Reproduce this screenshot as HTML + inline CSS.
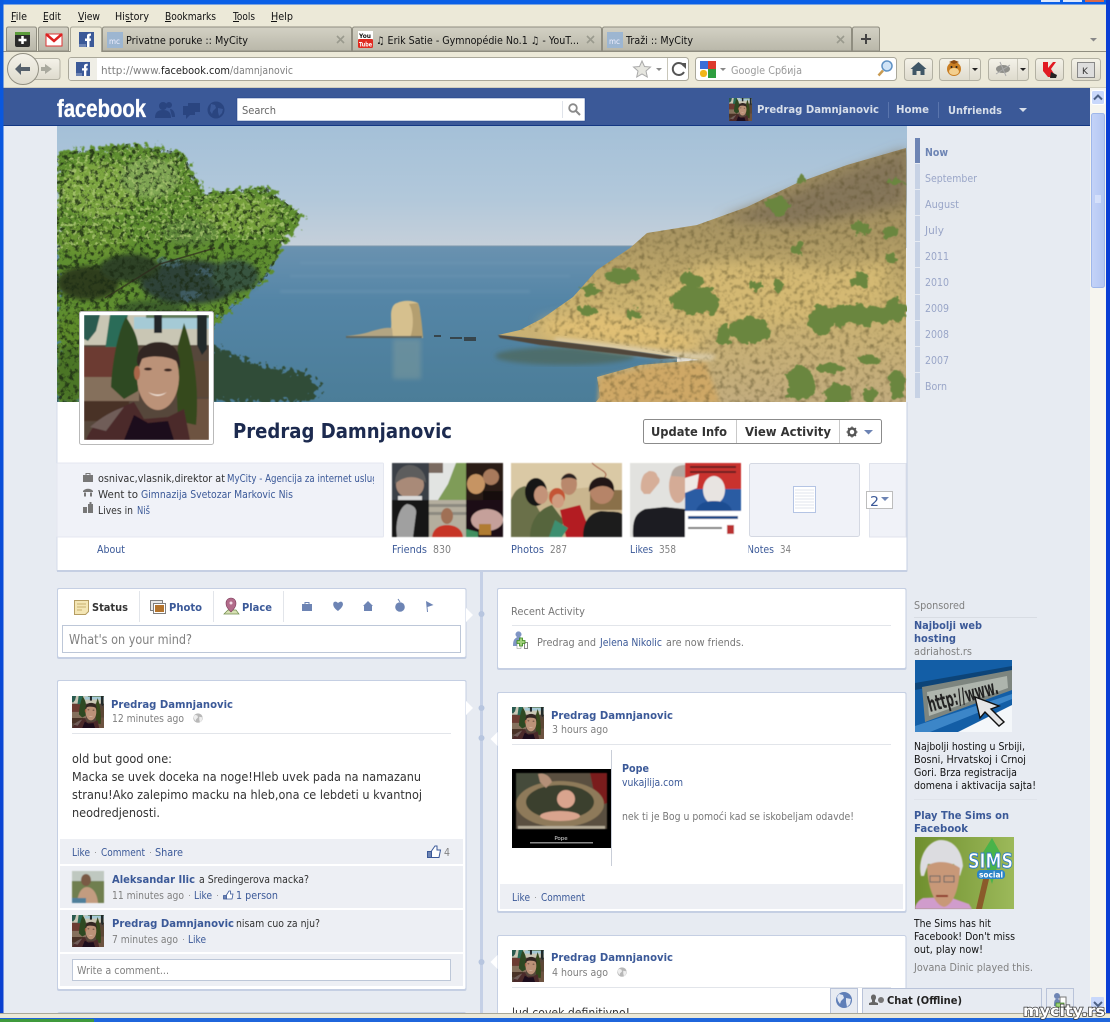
<!DOCTYPE html>
<html><head><meta charset="utf-8"><title>Predrag Damnjanovic</title>
<style>
html,body{margin:0;padding:0;width:1110px;height:1022px;overflow:hidden;background:#e7ebf2}
svg{display:block}
text{font-family:"DejaVu Sans","Liberation Sans",sans-serif;font-size:10.5px;fill:#333;white-space:pre}
.b{font-weight:bold}
.l{fill:#3b5998}
.g{fill:#808080}
.m{fill:#111;font-size:10.5px}
.n{fill:#9aa6c8}
.card{fill:#fff;stroke:#c5cfe3;stroke-width:1}
.bar{fill:#edeff4}
.hr{stroke:#e2e5ea;stroke-width:1}
</style></head><body>
<svg xmlns="http://www.w3.org/2000/svg" width="1110" height="1022" viewBox="0 0 1110 1022">
<defs>
<linearGradient id="sky" x1="0" y1="0" x2="0" y2="1"><stop offset="0" stop-color="#a4c0d8"/><stop offset=".6" stop-color="#b2c8da"/><stop offset="1" stop-color="#c6d0da"/></linearGradient>
<linearGradient id="sea" x1="0" y1="0" x2="0" y2="1"><stop offset="0" stop-color="#6a92b0"/><stop offset=".35" stop-color="#5485a6"/><stop offset="1" stop-color="#4b7d98"/></linearGradient>
<linearGradient id="hillg" x1="0" y1="0" x2="0" y2="1"><stop offset="0" stop-color="#96865f"/><stop offset=".35" stop-color="#ab9763"/><stop offset=".6" stop-color="#ccb370"/><stop offset="1" stop-color="#c2ac7e"/></linearGradient>
<linearGradient id="tab" x1="0" y1="0" x2="0" y2="1"><stop offset="0" stop-color="#d3d1c4"/><stop offset="1" stop-color="#b9b7a9"/></linearGradient>
<linearGradient id="btn" x1="0" y1="0" x2="0" y2="1"><stop offset="0" stop-color="#f4f2e9"/><stop offset="1" stop-color="#dedbcd"/></linearGradient>
<linearGradient id="thumb" x1="0" y1="0" x2="1" y2="0"><stop offset="0" stop-color="#c4d3f8"/><stop offset="1" stop-color="#b3c6f2"/></linearGradient>
<linearGradient id="win" x1="0" y1="0" x2="0" y2="1"><stop offset="0" stop-color="#0a5be0"/><stop offset="1" stop-color="#0b3fd0"/></linearGradient>
<linearGradient id="sims" x1="0" y1="0" x2="1" y2="0"><stop offset="0" stop-color="#6f8f2e"/><stop offset="1" stop-color="#9cb95a"/></linearGradient>
<filter id="b0" x="-5%" y="-5%" width="110%" height="110%"><feGaussianBlur stdDeviation=".6"/></filter>
<filter id="b1" x="-10%" y="-10%" width="120%" height="120%"><feGaussianBlur stdDeviation="1.2"/></filter>
<filter id="b2" x="-10%" y="-10%" width="120%" height="120%"><feGaussianBlur stdDeviation="2.5"/></filter>
<filter id="b5" x="-20%" y="-20%" width="140%" height="140%"><feGaussianBlur stdDeviation="6"/></filter>
<filter id="rough" x="-8%" y="-8%" width="116%" height="116%" color-interpolation-filters="sRGB"><feTurbulence type="fractalNoise" baseFrequency=".11" numOctaves="3" seed="3" result="n"/><feDisplacementMap in="SourceGraphic" in2="n" scale="13" xChannelSelector="R" yChannelSelector="G"/><feGaussianBlur stdDeviation=".5"/></filter>
<filter id="needle" x="-8%" y="-8%" width="116%" height="116%" color-interpolation-filters="sRGB"><feTurbulence type="fractalNoise" baseFrequency=".2" numOctaves="3" seed="11" result="n"/><feDisplacementMap in="SourceGraphic" in2="n" scale="20" xChannelSelector="R" yChannelSelector="G"/><feGaussianBlur stdDeviation=".5"/></filter>
<filter id="tex" x="0" y="0" width="100%" height="100%" color-interpolation-filters="sRGB"><feTurbulence type="fractalNoise" baseFrequency=".2" numOctaves="3" seed="4"/><feColorMatrix values="0 0 0 0 .33  0 0 0 0 .29  0 0 0 0 .15  3 0 0 0 -1.45"/><feGaussianBlur stdDeviation=".6"/><feComposite in2="SourceAlpha" operator="in"/></filter>
<filter id="texd" x="0" y="0" width="100%" height="100%" color-interpolation-filters="sRGB"><feTurbulence type="fractalNoise" baseFrequency=".2" numOctaves="3" seed="9"/><feColorMatrix values="0 0 0 0 .11  0 0 0 0 .17  0 0 0 0 .08  4 0 0 0 -1.9"/><feComposite in2="SourceAlpha" operator="in"/></filter>
<filter id="texl" x="0" y="0" width="100%" height="100%" color-interpolation-filters="sRGB"><feTurbulence type="fractalNoise" baseFrequency=".26" numOctaves="2" seed="21"/><feColorMatrix values="0 0 0 0 .66  0 0 0 0 .77  0 0 0 0 .44  0 4.5 0 0 -2.3"/><feComposite in2="SourceAlpha" operator="in"/></filter>
<clipPath id="cov"><rect x="57" y="126" width="850" height="276"/></clipPath>
<clipPath id="c1"><rect x="0" y="0" width="125" height="125"/></clipPath>
<clipPath id="infoclip"><rect x="57" y="463" width="317" height="74"/></clipPath>
<clipPath id="notesclip"><rect x="748.500" y="540" width="60" height="20"/></clipPath>
<symbol id="me" viewBox="0 0 125 125">
<g clip-path="url(#c1)"><g filter="url(#b0)">
<rect width="125" height="125" fill="#57463a"/>
<rect width="125" height="30" fill="#c9c6b4"/>
<rect x="50" y="2" width="75" height="12" fill="#a5cad6"/>
<rect x="62" y="0" width="63" height="3" fill="#5f7a58"/>
<path d="M0 0H16L12 16 4 26 0 24Z" fill="#2a5a50"/>
<path d="M26 0H44L40 16 30 40 20 42Z" fill="#2b6c58"/>
<rect x="0" y="32" width="36" height="30" fill="#6c3a30"/>
<rect x="0" y="62" width="55" height="24" fill="#85705c"/>
<rect x="0" y="86" width="45" height="20" fill="#4a3328"/>
<rect x="90" y="46" width="35" height="36" fill="#5b4636"/>
<rect x="100" y="84" width="25" height="41" fill="#6d5240"/>
<path d="M27 72C28 48 34 16 42 2 50 14 56 26 54 40L54 76 40 84Z" fill="#2f4a22"/>
<path d="M100 8C108 30 116 70 112 110L94 106 92 60 94 30Z" fill="#34491f"/>
<path d="M113 0h10v34l-5 6-5-10Z" fill="#222b2c"/>
<rect x="70" y="0" width="8" height="18" fill="#20282b"/>
<ellipse cx="74" cy="62" rx="21" ry="33" fill="#bb9278"/>
<ellipse cx="53" cy="58" rx="3" ry="7" fill="#a9664a"/>
<path d="M53 48C52 33 63 27 75 27 88 27 97 34 96 54L92 46C84 41 66 40 58 44L55 52Z" fill="#332722"/>
<ellipse cx="64" cy="54" rx="4" ry="1.500" fill="#3a2720"/><ellipse cx="84" cy="55" rx="4" ry="1.500" fill="#3a2720"/>
<path d="M64 77q10 5 19 0q-9 8-19 0Z" fill="#efe0d4"/>
<path d="M2 125C10 104 30 95 50 87L60 104 84 102 100 94 106 125Z" fill="#4c2a2c"/>
<path d="M40 125 L50 100 64 108 84 106 90 125Z" fill="#1c0e1a"/>
<path d="M6 112q16-14 34-20l-18 24Z" fill="#6f5d58"/>
</g></g>
</symbol>
<symbol id="globe" viewBox="0 0 16 16"><circle cx="8" cy="8" r="8" fill="#5f7fb8"/><path d="M3 2l4 1 1 3-3 3-1 3-2-3-1-4ZM10 6l5 1-1 5-3 3-1-5Z" fill="#dfe6f3"/></symbol>
<symbol id="ggl" viewBox="0 0 16 16"><circle cx="8" cy="8" r="7.500" fill="#b8b8b8"/><path d="M3 3l4 1 1 3-3 3-1 3-2-3-1-4ZM10 6l5 1-1 5-3 3-1-5Z" fill="#eee"/></symbol>
</defs>

<!-- page -->
<rect width="1110" height="1022" fill="#e7ebf2"/>

<!-- fb bar -->
<rect x="3" y="88" width="1087" height="37" fill="#3b5998"/>
<rect x="3" y="125" width="1087" height="1" fill="#133783"/>
<text x="57" y="117" textLength="89" lengthAdjust="spacingAndGlyphs" style="font:bold 25px 'Liberation Sans',sans-serif;fill:#fff;stroke:#fff;stroke-width:.35">facebook</text>
<g fill="#2a4580">
<circle cx="163" cy="106" r="4"/><path d="M155 118c0-6 3-8 8-8s8 2 8 8Z"/><circle cx="169" cy="105" r="3"/><path d="M170 109c3 0 5 3 5 8h-3Z"/>
<rect x="183" y="106" width="12" height="9"/><path d="M186 115v4l4-4Z"/><rect x="188" y="103" width="12" height="9"/>
<circle cx="216" cy="110" r="8.500"/></g>
<path d="M211 104l4 1 1 3-3 3-1 3-2-3ZM218 108l5 1-1 4-3 3-1-4Z" fill="#3b5998"/>
<rect x="237" y="98" width="348" height="23" fill="#fff" stroke="#1d4088" stroke-width=".5"/>
<text x="242" y="114" textLength="34" lengthAdjust="spacingAndGlyphs" class="g" style="fill:#666">Search</text>
<line x1="562.500" y1="101" x2="562.500" y2="118" stroke="#dfe3ea"/>
<circle cx="573" cy="108" r="3.800" fill="none" stroke="#8a8a8a" stroke-width="1.800"/><line x1="576" y1="111" x2="580" y2="115" stroke="#8a8a8a" stroke-width="2"/>
<svg x="729" y="98" width="23" height="23" viewBox="0 0 125 125"><use href="#me" width="125" height="125"/></svg>
<text x="757" y="113" class="b" textLength="122" lengthAdjust="spacingAndGlyphs" style="fill:#d8dfea">Predrag Damnjanovic</text>
<rect x="888" y="102" width="1" height="16" fill="#5a75ad"/>
<text x="896" y="113" class="b" textLength="33" lengthAdjust="spacingAndGlyphs" style="fill:#d8dfea">Home</text>
<rect x="938" y="102" width="1" height="16" fill="#5a75ad"/>
<text x="948" y="114" class="b" textLength="54" lengthAdjust="spacingAndGlyphs" style="fill:#d8dfea">Unfriends</text>
<path d="M1019 108h8l-4 4Z" fill="#d8dfea"/>

<!-- cover -->
<g clip-path="url(#cov)">
<rect x="57" y="126" width="850" height="122" fill="url(#sky)"/>
<rect x="57" y="246" width="620" height="157" fill="url(#sea)"/>
<g fill="#85a8c0" opacity=".22" filter="url(#b1)"><rect x="300" y="262" width="320" height="2"/><rect x="290" y="275" width="280" height="2"/><rect x="280" y="290" width="250" height="3"/></g>
<rect x="57" y="245.500" width="600" height="1" fill="#7e98ac"/>
<ellipse cx="565" cy="356" rx="70" ry="9" fill="#4d6d6c" filter="url(#b2)"/>
<!-- rock -->
<g filter="url(#b0)">
<path d="M390 333c2-6 1-12 1-18 0-6 2-11 6-12 6-3 15-3 21 0 3 7 2 13 2 19l3 16-33-1Z" fill="#d6c08e"/>
<path d="M409 304c5 8 5 24 1 34l13-1c-1-12-2-24-5-34Z" fill="#b49f6f"/>
<path d="M346 336c10-1 18-2 26-5 8-2 14-4 20-3l1 10-46-.5Z" fill="#b3a583"/>
<rect x="346" y="336" width="76" height="2" fill="#5f6660"/>
</g>
<rect x="393" y="339" width="28" height="40" fill="#96a89c" opacity=".35" filter="url(#b2)"/>
<g fill="#37454c"><rect x="434" y="335" width="7" height="2"/><rect x="450" y="337" width="12" height="2"/><rect x="464" y="337" width="12" height="4"/></g>
<!-- hill -->
<path d="M906 148 847 165 797 183 747 207 697 225 647 233 630 248 597 270 573 297 543 318 520 330 498 335 547 340 613 348 672 356 700 360 640 365 597 377 600 397 595 403H906Z" fill="url(#hillg)"/>
<g filter="url(#b5)">
<path d="M650 300 700 265 760 262 830 270 890 262 880 300 800 320 700 330Z" fill="#d4b973"/>
<path d="M540 322 600 310 660 325 710 340 680 352 610 343 547 336Z" fill="#e0bf74"/>
<path d="M906 150 800 190 720 220 800 225 906 205Z" fill="#85765a"/>
</g>
<path d="M600 378 655 365 705 362 720 403H598Z" fill="#cfa866" filter="url(#b2)"/>
<path d="M556 338 610 344 672 352 716 355 712 360 670 358 610 351 554 342Z" fill="#e0d6bc" opacity=".8" filter="url(#b2)"/>
<path d="M498 335 547 340 613 348 680 358 660 359 610 353 540 345 500 338Z" fill="#51463a" filter="url(#b0)"/>
<path d="M906 148 847 165 797 183 747 207 697 225 647 233 630 248 597 270 573 297 543 318 520 330 598 340 680 356 640 365 597 377 600 403H906Z" filter="url(#tex)" opacity=".5"/>
<g fill="#6a863f" filter="url(#rough)">
<ellipse cx="623" cy="276" rx="17" ry="8"/><ellipse cx="593" cy="291" rx="9" ry="5"/><ellipse cx="588" cy="310" rx="8" ry="4"/><ellipse cx="633" cy="314" rx="8" ry="5"/>
<ellipse cx="695" cy="300" rx="24" ry="14"/><ellipse cx="692" cy="280" rx="11" ry="8"/><ellipse cx="710" cy="305" rx="8" ry="9"/>
<ellipse cx="750" cy="330" rx="20" ry="13"/><ellipse cx="724" cy="335" rx="7" ry="10"/><ellipse cx="778" cy="286" rx="5" ry="6"/><ellipse cx="757" cy="286" rx="7" ry="5"/>
<ellipse cx="855" cy="315" rx="40" ry="11"/><ellipse cx="820" cy="320" rx="12" ry="14"/><ellipse cx="895" cy="310" rx="12" ry="11"/>
<ellipse cx="860" cy="228" rx="10" ry="8"/><ellipse cx="890" cy="232" rx="7" ry="6"/><ellipse cx="778" cy="205" rx="12" ry="10"/><ellipse cx="801" cy="179" rx="5" ry="5"/>
<ellipse cx="896" cy="181" rx="6" ry="5"/><ellipse cx="799" cy="248" rx="5" ry="6"/><ellipse cx="860" cy="280" rx="8" ry="8"/><ellipse cx="890" cy="258" rx="6" ry="5"/>
<ellipse cx="800" cy="382" rx="14" ry="18"/><ellipse cx="838" cy="394" rx="14" ry="10"/><ellipse cx="870" cy="395" rx="8" ry="7"/><ellipse cx="897" cy="385" rx="7" ry="15"/><ellipse cx="870" cy="360" rx="10" ry="5"/><ellipse cx="830" cy="368" rx="14" ry="5"/>
</g>
<!-- pine -->
<path d="M213 345 263 367 305 372 320 387 310 402H190Z" fill="#304c38" filter="url(#needle)"/>
<path d="M57 153 87 150 133 143 183 153 203 193 267 187 303 217 283 247 267 277 233 307 217 322 175 402H57Z" fill="#5f8e30" filter="url(#needle)"/>
<g filter="url(#b2)">
<ellipse cx="100" cy="190" rx="40" ry="28" fill="#7ca53f"/>
<ellipse cx="150" cy="178" rx="30" ry="20" fill="#7fa552"/>
<ellipse cx="238" cy="215" rx="40" ry="19" fill="#76a03a"/>
<ellipse cx="95" cy="240" rx="36" ry="18" fill="#689330"/>
<ellipse cx="190" cy="232" rx="28" ry="14" fill="#60893a"/>
<ellipse cx="88" cy="283" rx="31" ry="17" fill="#2f3d1f"/>
<ellipse cx="190" cy="282" rx="50" ry="22" fill="#2f4338"/>
<ellipse cx="235" cy="276" rx="24" ry="16" fill="#39553f"/>
<ellipse cx="130" cy="268" rx="30" ry="14" fill="#2f4226"/>
<ellipse cx="90" cy="330" rx="34" ry="20" fill="#5d8a2c"/>
<ellipse cx="150" cy="310" rx="34" ry="10" fill="#3c5f2c"/>
<ellipse cx="70" cy="375" rx="14" ry="30" fill="#4c7428"/>
</g>
<g fill="#4d7086" filter="url(#rough)" opacity=".55"><ellipse cx="170" cy="262" rx="12" ry="5"/><ellipse cx="205" cy="272" rx="10" ry="4"/><ellipse cx="190" cy="296" rx="11" ry="5"/></g>
<path d="M57 153 87 150 133 143 183 153 203 193 267 187 303 217 283 247 267 277 233 307 217 322 175 402H57Z" filter="url(#texd)" opacity=".8"/>
<path d="M57 160 87 155 133 148 183 158 200 196 267 192 298 217 283 240 150 240 57 250Z" filter="url(#texl)" opacity=".85"/>
<path d="M105 298 160 264 215 248" fill="none" stroke="#2d2a1c" stroke-width="1.500" opacity=".7"/>
</g>
<rect x="57" y="402" width="850" height="169" fill="#fff"/>
<path d="M57 571H907V402" fill="none" stroke="#c5cfe3"/><path d="M57 402V571" stroke="#d4dbe9"/>
<rect x="57" y="570" width="850" height="2" fill="#c5cfe3"/>

<!-- profile pic -->
<rect x="79.500" y="311.500" width="134" height="133" rx="2" fill="#fff" stroke="#b9b9b9"/>
<use href="#me" x="84" y="315" width="125" height="125"/>
<text x="233" y="438" class="b" textLength="219" lengthAdjust="spacingAndGlyphs" style="font-size:20px;fill:#1c2a4f">Predrag Damnjanovic</text>

<!-- action buttons -->
<rect x="643.500" y="419.500" width="238" height="24" rx="2" fill="#fff" stroke="#8b8b8b"/>
<rect x="736" y="420" width="1" height="23" fill="#c9c9c9"/><rect x="839" y="420" width="1" height="23" fill="#c9c9c9"/>
<text x="651" y="436" class="b" textLength="76" lengthAdjust="spacingAndGlyphs" style="font-size:12px;fill:#333">Update Info</text>
<text x="745" y="436" class="b" textLength="86" lengthAdjust="spacingAndGlyphs" style="font-size:12px;fill:#333">View Activity</text>
<circle cx="852" cy="432" r="3.500" fill="none" stroke="#555" stroke-width="2.500"/>
<path d="M852 426.500v2M852 435.500v2M846.500 432h2M855.500 432h2M848 428l1.500 1.500M854.500 434.500l1.500 1.500M856 428l-1.500 1.500M849.500 434.500l-1.500 1.500" stroke="#555" stroke-width="1.300"/>
<path d="M864 430h9l-4.500 4.500Z" fill="#6d84b4"/>

<!-- info box -->
<rect x="57" y="463" width="326.500" height="74" rx="1" fill="#f0f2f8" stroke="#e4e7f0"/>
<g fill="#777">
<path d="M83 475h10v7H83ZM85.500 475v-2h5v2h-1v-1h-3v1Z"/>
<path d="M83 491c2-3 8-3 10 0v1H83ZM84 492.500h2v4h-2ZM90 492.500h2v4h-2Z"/>
<path d="M83 507h4v6h-4ZM88 504h5v9h-5ZM89.500 502h2v2h-2Z"/>
</g>
<g clip-path="url(#infoclip)">
<text x="98" y="482" class="m" style="fill:#333" textLength="127" lengthAdjust="spacingAndGlyphs">osnivac,vlasnik,direktor at</text>
<text x="227" y="482" class="l" textLength="156" lengthAdjust="spacingAndGlyphs">MyCity - Agencija za internet usluge</text>
</g>
<text x="98" y="498" textLength="40" lengthAdjust="spacingAndGlyphs">Went to</text>
<text x="141" y="498" class="l" textLength="152" lengthAdjust="spacingAndGlyphs">Gimnazija Svetozar Markovic Nis</text>
<text x="98" y="514" textLength="35" lengthAdjust="spacingAndGlyphs">Lives in</text>
<text x="137" y="514" class="l" textLength="13" lengthAdjust="spacingAndGlyphs">Niš</text>
<text x="97" y="553" class="l" textLength="28" lengthAdjust="spacingAndGlyphs">About</text>

<!-- friends collage -->
<g filter="url(#b0)">
<rect x="392" y="463" width="37" height="37" fill="#3a3f46"/>
<ellipse cx="410" cy="485" rx="14" ry="13" fill="#a98a78"/><path d="M395 484c0-14 8-19 15-19s16 6 16 18c-8-8-22-8-31 1Z" fill="#5d5d5d"/><rect x="398" y="496" width="24" height="4" fill="#d9d9d9"/>
<rect x="429" y="463" width="37" height="37" fill="#e2e4e2"/><path d="M466 463v37h-28l10-16 8-21Z" fill="#7f9c58"/><rect x="429" y="463" width="14" height="10" fill="#7a6a60"/>
<rect x="466" y="463" width="37" height="37" fill="#2a1a12"/><ellipse cx="476" cy="484" rx="9" ry="10" fill="#c69463"/><ellipse cx="491" cy="477" rx="8" ry="8" fill="#a87a5c"/><rect x="483" y="491" width="20" height="9" fill="#141110"/>
<rect x="392" y="500" width="37" height="37" fill="#141414"/><path d="M397 537c-2-14 2-30 10-33 7 1 10 5 9 10l-3 23Z" fill="#a0a0a0"/>
<rect x="429" y="500" width="37" height="37" fill="#b4ae9e"/><rect x="429" y="504" width="37" height="3" fill="#8c8a80"/><rect x="429" y="512" width="37" height="3" fill="#8c8a80"/><ellipse cx="447" cy="516" rx="6" ry="8" fill="#a06f55"/><path d="M432 537c1-9 8-12 15-12s15 3 16 12Z" fill="#c73528"/>
<rect x="466" y="500" width="37" height="37" fill="#1b1013"/><ellipse cx="487" cy="520" rx="16" ry="11" fill="#c5a09a"/><rect x="479" y="524" width="12" height="11" fill="#b07c32"/><path d="M466 537v-8l12 3v5Z" fill="#3f8f5e"/>
</g>

<!-- photos -->
<g filter="url(#b0)">
<rect x="511" y="463" width="111" height="74" rx="2" fill="#c9b58e"/>
<path d="M511 463h111v30l-30-6-40 4-41 6Z" fill="#dac9a5"/>
<path d="M592 463c6 6 14 8 14 12l-4 8" stroke="#a5553c" fill="none"/>
<path d="M590 490h32v20h-32Z" fill="#8a6f4a"/>
<path d="M511 500c3-8 6-12 14-14l16 28-4 23H511Z" fill="#6b7049"/>
<ellipse cx="536" cy="492" rx="11" ry="14" fill="#181414"/><ellipse cx="541" cy="495" rx="7" ry="9" fill="#c39379"/>
<path d="M530 537c0-15 8-28 22-32l12 16-6 16Z" fill="#56653c"/>
<ellipse cx="557" cy="497" rx="8" ry="9" fill="#c45534"/><ellipse cx="558" cy="501" rx="6" ry="7" fill="#cf9c80"/>
<path d="M560 510l20-5 12 32h-26Z" fill="#b31c24"/>
<ellipse cx="569" cy="484" rx="8" ry="11" fill="#b9886c"/><path d="M561 480c2-8 14-9 16 0-5-3-11-3-16 0Z" fill="#2b2320"/>
<ellipse cx="602" cy="491" rx="12" ry="13" fill="#b68467"/><path d="M589 492c-1-12 8-15 13-15 8 0 13 6 12 15-4-7-16-9-25 0Z" fill="#201814"/>
<path d="M583 537c0-15 6-24 18-26 10 1 18 0 21 3v23Z" fill="#1a1a1c"/>
<path d="M555 520l13 8-6 9h-13Z" fill="#3d8f6f"/>
</g>

<!-- likes -->
<g filter="url(#b0)">
<rect x="630" y="463" width="55" height="74" fill="#e2e2df"/>
<path d="M633 537c-1-20 4-24 12-28l20-2 20 2v28Z" fill="#1d1d22"/>
<path d="M641 490c-1-8 2-16 5-17l3-2c2 0 7 0 8 4 1 3 4 3 2 8l-9 11h-6Z" fill="#d6ae98"/>
<ellipse cx="678" cy="486" rx="9" ry="17" fill="#d4ab96"/><path d="M671 476c1-9 8-11 14-11v12Z" fill="#b3a79f"/>
<rect x="685" y="463" width="56" height="74" rx="1" fill="#fff"/>
<rect x="685" y="463" width="56" height="26" fill="#c9302f"/>
<rect x="685" y="489" width="56" height="22" fill="#2a5ba3"/>
<path d="M685 478l14-4-2 14-12 5Z" fill="#efe9e6"/>
<ellipse cx="714" cy="490" rx="11" ry="14" fill="#e8e4e1"/><path d="M696 511c2-8 10-10 18-10s16 2 18 10Z" fill="#1e4d92"/>
<rect x="688" y="516" width="50" height="3" fill="#234a86"/><rect x="688" y="527" width="34" height="2" fill="#777"/><rect x="727" y="525" width="7" height="9" fill="#b33"/>
<rect x="690" y="466" width="46" height="2" fill="#6a2222"/><rect x="690" y="471" width="46" height="2" fill="#6a2222"/>
</g>

<!-- notes -->
<rect x="749.500" y="463.500" width="110" height="73" rx="2" fill="#f0f2f8" stroke="#d4d8e2"/>
<rect x="793.500" y="486.500" width="22" height="26" fill="#fff" stroke="#b4c4e4"/>
<g stroke="#e2e5ee"><path d="M795 490h19M795 493h19M795 496h19M795 499h19M795 502h19M795 505h19M795 508h19"/></g>
<path d="M869.500 463.500H906V537H869.500Z" fill="#f0f2f8" stroke="#e0e3ec"/>
<rect x="866.500" y="491.500" width="26" height="17" fill="#fff" stroke="#bdbdbd"/>
<text x="870" y="506" style="font-size:13px;fill:#3b5998" textLength="9" lengthAdjust="spacingAndGlyphs">2</text>
<path d="M881 497h8l-4 4Z" fill="#6d84b4"/>

<text x="392" y="553" class="l" textLength="35" lengthAdjust="spacingAndGlyphs">Friends</text><text x="433" y="553" class="g" textLength="18" lengthAdjust="spacingAndGlyphs">830</text>
<text x="511" y="553" class="l" textLength="33" lengthAdjust="spacingAndGlyphs">Photos</text><text x="550" y="553" class="g" textLength="17" lengthAdjust="spacingAndGlyphs">287</text>
<text x="630" y="553" class="l" textLength="23" lengthAdjust="spacingAndGlyphs">Likes</text><text x="659" y="553" class="g" textLength="17" lengthAdjust="spacingAndGlyphs">358</text>
<g clip-path="url(#notesclip)"><text x="747" y="553" class="l" textLength="27" lengthAdjust="spacingAndGlyphs">Notes</text></g><text x="780" y="553" class="g" textLength="11" lengthAdjust="spacingAndGlyphs">34</text>

<!-- timeline spine -->
<rect x="480" y="572" width="3" height="445" fill="#c5d0e6"/>
<circle cx="481.500" cy="614" r="3" fill="#b7c5df"/><circle cx="481.500" cy="738" r="3" fill="#b7c5df"/><circle cx="481.500" cy="708" r="3" fill="#b7c5df"/><circle cx="481.500" cy="962" r="3" fill="#b7c5df"/>

<!-- composer -->
<rect x="57" y="588" width="409.500" height="71" rx="2" fill="#c5cfe3"/>
<rect x="57.500" y="588.500" width="408.500" height="69" rx="2" class="card"/>
<path d="M466 608l7 7-7 7Z" fill="#fff"/>
<path d="M74.500 600.500h14v11l-3 3h-11Z" fill="#f4e6b5" stroke="#b59d62"/><path d="M77 604h9M77 607h9M77 610h5" stroke="#c9b06e"/>
<text x="92" y="611" class="b" textLength="36" lengthAdjust="spacingAndGlyphs" style="fill:#333">Status</text>
<rect x="139" y="591" width="1" height="31" fill="#e2e5ea"/>
<rect x="150.500" y="600.500" width="12" height="10" fill="#e8e8e8" stroke="#7f7f7f"/><rect x="153.500" y="603.500" width="12" height="10" fill="#fff" stroke="#7f7f7f"/><rect x="155" y="605" width="9" height="7" fill="#b4742d"/>
<text x="169" y="611" class="b l" textLength="33" lengthAdjust="spacingAndGlyphs">Photo</text>
<rect x="213" y="591" width="1" height="31" fill="#e2e5ea"/>
<path d="M224 614l4-4h8l3 4Z" fill="#d7e1b4" stroke="#6f8a4a" stroke-width=".7"/><path d="M231 612c-5-5-5-7-5-9a5 5 0 0 1 10 0c0 2 0 4-5 9Z" fill="#b26b8a" stroke="#7d3c5b" stroke-width=".6"/><circle cx="231" cy="603" r="1.500" fill="#f2dce6"/>
<text x="242" y="611" class="b l" textLength="30" lengthAdjust="spacingAndGlyphs">Place</text>
<rect x="283" y="591" width="1" height="31" fill="#e2e5ea"/>
<g fill="#6d84b4">
<path d="M302 604h10v7h-10ZM304.500 604v-2h5v2h-1v-1h-3v1Z"/>
<path d="M338 611c-6-4-5-8-4-9 2-1 3 0 4 1 1-1 3-2 4-1 2 2 1 5-4 9Z"/>
<path d="M368 601l5 5h-1v5h-8v-5h-1Z"/>
<circle cx="400" cy="607" r="4.800"/><path d="M400 602l-2-3" stroke="#6d84b4" fill="none"/>
<path d="M426 601l1 11h1l-.5-5 6-2Z"/>
</g>
<path d="M74 625l5-4 5 4Z" fill="#fff"/>
<rect x="62.500" y="625.500" width="398" height="27" fill="#fff" stroke="#bdc7d8"/>
<text x="69" y="644" class="g" textLength="123" lengthAdjust="spacingAndGlyphs" style="font-size:13px">What's on your mind?</text>

<!-- post 1 -->
<rect x="57" y="680" width="409.500" height="311" rx="2" fill="#c5cfe3"/>
<rect x="57.500" y="680.500" width="408.500" height="309" rx="2" class="card"/>
<path d="M466 701l7 7-7 7Z" fill="#fff"/>
<use href="#me" x="72" y="696" width="32" height="32"/>
<text x="111" y="708" class="b l" textLength="122" lengthAdjust="spacingAndGlyphs">Predrag Damnjanovic</text>
<text x="112" y="722" class="g" textLength="72" lengthAdjust="spacingAndGlyphs">12 minutes ago</text>
<use href="#ggl" x="193" y="713" width="10" height="10"/>
<line x1="72" y1="733.500" x2="451" y2="733.500" class="hr"/>
<text x="72" y="763" style="font-size:12px" textLength="100" lengthAdjust="spacingAndGlyphs">old but good one:</text>
<text x="72" y="781" style="font-size:12px" textLength="349" lengthAdjust="spacingAndGlyphs">Macka se uvek doceka na noge!Hleb uvek pada na namazanu</text>
<text x="72" y="799" style="font-size:12px" textLength="350" lengthAdjust="spacingAndGlyphs">stranu!Ako zalepimo macku na hleb,ona ce lebdeti u kvantnoj</text>
<text x="72" y="817" style="font-size:12px" textLength="88" lengthAdjust="spacingAndGlyphs">neodredjenosti.</text>
<rect x="60" y="839" width="403" height="25" class="bar"/>
<text x="72" y="856" class="l" textLength="18" lengthAdjust="spacingAndGlyphs">Like</text><rect x="95" y="852" width="1" height="1" fill="#999"/>
<text x="101" y="856" class="l" textLength="44" lengthAdjust="spacingAndGlyphs">Comment</text><rect x="150" y="852" width="1" height="1" fill="#999"/>
<text x="155" y="856" class="l" textLength="28" lengthAdjust="spacingAndGlyphs">Share</text>
<path d="M427.500 851.500h4v6h-4Z" fill="#6d84b4" stroke="#3b5998"/><path d="M431.500 851l3.500-5h2v4h3.500l-1.500 7.500h-7.500Z" fill="#fff" stroke="#3b5998"/>
<text x="444" y="856" class="g" textLength="6" lengthAdjust="spacingAndGlyphs">4</text>

<rect x="60" y="866" width="403" height="42" class="bar"/>
<g filter="url(#b0)"><rect x="72" y="871" width="32" height="32" fill="#6f7f50"/><rect x="72" y="871" width="32" height="10" fill="#bfc8c0"/><ellipse cx="86" cy="880" rx="5" ry="6" fill="#7a5a44"/><path d="M77 903c1-12 6-16 10-16s10 4 11 16Z" fill="#c39c80"/><rect x="72" y="898" width="14" height="5" fill="#4f7f9a"/></g>
<text x="112" y="883" class="b l" textLength="83" lengthAdjust="spacingAndGlyphs">Aleksandar Ilic</text>
<text x="199" y="883" textLength="110" lengthAdjust="spacingAndGlyphs">a Sredingerova macka?</text>
<text x="112" y="899" class="g" textLength="72" lengthAdjust="spacingAndGlyphs">11 minutes ago</text><rect x="189" y="895" width="1" height="1" fill="#999"/>
<text x="194" y="899" class="l" textLength="18" lengthAdjust="spacingAndGlyphs">Like</text><rect x="217" y="895" width="1" height="1" fill="#999"/>
<path d="M223.500 895.500h3v3.500h-3Z" fill="#6d84b4" stroke="#3b5998" stroke-width=".8"/><path d="M226.500 895l2.500-4h1.500v3h2.500l-1 5h-5.500Z" fill="#fff" stroke="#3b5998" stroke-width=".8"/>
<text x="236" y="899" class="l" textLength="42" lengthAdjust="spacingAndGlyphs">1 person</text>

<rect x="60" y="910" width="403" height="42" class="bar"/>
<use href="#me" x="72" y="915" width="32" height="32"/>
<text x="112" y="927" class="b l" textLength="122" lengthAdjust="spacingAndGlyphs">Predrag Damnjanovic</text>
<text x="236" y="927" textLength="84" lengthAdjust="spacingAndGlyphs">nisam cuo za nju?</text>
<text x="112" y="943" class="g" textLength="66" lengthAdjust="spacingAndGlyphs">7 minutes ago</text><rect x="183" y="939" width="1" height="1" fill="#999"/>
<text x="188" y="943" class="l" textLength="18" lengthAdjust="spacingAndGlyphs">Like</text>

<rect x="60" y="954" width="403" height="32" class="bar"/>
<rect x="72.500" y="959.500" width="378" height="21" fill="#fff" stroke="#bdc7d8"/>
<text x="77" y="974" class="g" textLength="92" lengthAdjust="spacingAndGlyphs">Write a comment...</text>

<rect x="57.500" y="1012.500" width="408.500" height="20" rx="2" class="card"/>

<!-- recent activity -->
<rect x="497" y="588" width="409.500" height="82" rx="2" fill="#c5cfe3"/>
<rect x="497.500" y="588.500" width="408.500" height="80" rx="2" class="card"/>
<text x="511" y="615" class="g" textLength="74" lengthAdjust="spacingAndGlyphs" style="fill:#777">Recent Activity</text>
<line x1="512" y1="625.500" x2="891" y2="625.500" class="hr"/>
<path d="M513 646c0-5 1-7 3-8l1-1a3 3 0 1 1 3 0c2 1 3 3 3 9Z" fill="#7f95c4"/>
<rect x="524.500" y="642.500" width="3" height="6" fill="#fff" stroke="#888"/><rect x="517" y="641" width="4" height="7.500" fill="#fff" stroke="#888" stroke-width=".5"/>
<path d="M517 640.500h2.500V638h3v2.500h2.500v3h-2.500V646h-3v-2.500H517Z" fill="#9fd07a" stroke="#3e8a1e" stroke-width=".8"/>
<text x="537" y="646" class="g" textLength="59" lengthAdjust="spacingAndGlyphs" style="fill:#777">Predrag and</text>
<text x="600" y="646" class="l" textLength="62" lengthAdjust="spacingAndGlyphs">Jelena Nikolic</text>
<text x="666" y="646" class="g" textLength="78" lengthAdjust="spacingAndGlyphs" style="fill:#777">are now friends.</text>

<!-- post 2 -->
<rect x="497" y="692" width="409.500" height="221" rx="2" fill="#c5cfe3"/>
<rect x="497.500" y="692.500" width="408.500" height="219" rx="2" class="card"/>
<path d="M497.500 732l-7 7 7 7Z" fill="#fff"/>
<use href="#me" x="512" y="707" width="32" height="32"/>
<text x="551" y="719" class="b l" textLength="122" lengthAdjust="spacingAndGlyphs">Predrag Damnjanovic</text>
<text x="552" y="733" class="g" textLength="56" lengthAdjust="spacingAndGlyphs">3 hours ago</text>
<line x1="512" y1="744.500" x2="891" y2="744.500" class="hr"/>
<rect x="512" y="769" width="99" height="79" fill="#000"/>
<g filter="url(#b0)">
<rect x="516" y="773" width="91" height="56" fill="#5a5040"/>
<path d="M516 773h30l6 14-36 16Z" fill="#444b3a"/><path d="M590 773h17v30l-10 4Z" fill="#7a1c1c"/>
<ellipse cx="560" cy="804" rx="44" ry="23" fill="#8e7a5a"/><ellipse cx="560" cy="802" rx="34" ry="17" fill="#3a3f2d"/>
<path d="M538 774c6-2 12 2 14 8l-6 6-6-6Z" fill="#b49078"/>
<ellipse cx="566" cy="799" rx="9" ry="9" fill="#d9a48e"/><ellipse cx="560" cy="816" rx="20" ry="5" fill="#d9a48e"/>
<rect x="518" y="826" width="87" height="3" fill="#b5ac98"/>
</g>
<text x="561" y="840" text-anchor="middle" style="font-size:5.500px;fill:#ddd">Pope</text>
<rect x="530" y="842" width="63" height="1.500" fill="#888"/>
<rect x="611" y="750" width="1" height="116" fill="#c9ced8"/>
<text x="622" y="772" class="b l" textLength="27" lengthAdjust="spacingAndGlyphs">Pope</text>
<text x="622" y="786" class="l" textLength="61" lengthAdjust="spacingAndGlyphs">vukajlija.com</text>
<text x="622" y="820" class="g" textLength="232" lengthAdjust="spacingAndGlyphs" style="fill:#777">nek ti je Bog u pomoći kad se iskobeljam odavde!</text>
<rect x="500" y="884" width="403" height="25" class="bar"/>
<text x="512" y="901" class="l" textLength="18" lengthAdjust="spacingAndGlyphs">Like</text><rect x="535" y="897" width="1" height="1" fill="#999"/>
<text x="541" y="901" class="l" textLength="44" lengthAdjust="spacingAndGlyphs">Comment</text>

<!-- post 3 -->
<rect x="497.500" y="935.500" width="408.500" height="100" rx="2" class="card"/>
<path d="M497.500 955l-7 7 7 7Z" fill="#fff"/>
<use href="#me" x="512" y="950" width="32" height="32"/>
<text x="551" y="961" class="b l" textLength="122" lengthAdjust="spacingAndGlyphs">Predrag Damnjanovic</text>
<text x="552" y="976" class="g" textLength="56" lengthAdjust="spacingAndGlyphs">4 hours ago</text>
<use href="#ggl" x="617" y="967" width="10" height="10"/>
<line x1="512" y1="987.500" x2="891" y2="987.500" class="hr"/>
<text x="512" y="1017" style="font-size:12px" textLength="118" lengthAdjust="spacingAndGlyphs">lud covek definitivno!</text>

<!-- timeline nav -->
<g fill="#c7d2e5">
<rect x="915" y="164" width="5" height="25"/><rect x="915" y="190" width="5" height="25"/><rect x="915" y="216" width="5" height="25"/><rect x="915" y="242" width="5" height="25"/><rect x="915" y="268" width="5" height="26"/><rect x="915" y="295" width="5" height="25"/><rect x="915" y="321" width="5" height="25"/><rect x="915" y="347" width="5" height="25"/><rect x="915" y="373" width="5" height="25"/>
</g>
<rect x="915" y="138" width="5" height="25" fill="#6d84b4"/>
<text x="925" y="156" class="b" textLength="23" lengthAdjust="spacingAndGlyphs" style="fill:#6d84b4">Now</text>
<text x="925" y="182" class="n" textLength="52" lengthAdjust="spacingAndGlyphs">September</text>
<text x="925" y="208" class="n" textLength="34" lengthAdjust="spacingAndGlyphs">August</text>
<text x="925" y="234" class="n" textLength="19" lengthAdjust="spacingAndGlyphs">July</text>
<text x="925" y="260" class="n" textLength="24" lengthAdjust="spacingAndGlyphs">2011</text>
<text x="925" y="286" class="n" textLength="24" lengthAdjust="spacingAndGlyphs">2010</text>
<text x="925" y="312" class="n" textLength="24" lengthAdjust="spacingAndGlyphs">2009</text>
<text x="925" y="338" class="n" textLength="24" lengthAdjust="spacingAndGlyphs">2008</text>
<text x="925" y="364" class="n" textLength="24" lengthAdjust="spacingAndGlyphs">2007</text>
<text x="925" y="390" class="n" textLength="22" lengthAdjust="spacingAndGlyphs">Born</text>

<!-- ads -->
<text x="914" y="609" class="g" textLength="51" lengthAdjust="spacingAndGlyphs">Sponsored</text>
<line x1="914" y1="617.500" x2="1037" y2="617.500" stroke="#d8dce3"/>
<text x="914" y="629" class="b l" textLength="68" lengthAdjust="spacingAndGlyphs">Najbolji web</text>
<text x="914" y="642" class="b l" textLength="42" lengthAdjust="spacingAndGlyphs">hosting</text>
<text x="914" y="655" class="g" textLength="58" lengthAdjust="spacingAndGlyphs">adriahost.rs</text>
<rect x="915" y="660" width="97" height="72" fill="#135ea6"/>
<path d="M958 732 1012 705V732Z" fill="#f4f7fa"/>
<path d="M915 726 1012 694V699L930 732H915Z" fill="#3c86c8"/>
<path d="M915 683 1012 666V672L915 690Z" fill="#0d4478"/>
<path d="M922 687 1012 670V690L925 722Z" fill="#7d857f"/>
<path d="M927 692 1007 676 1008 688 929 716Z" fill="#aeb5ad"/>
<text x="930" y="712" class="b" transform="rotate(-15 930 712)" textLength="72" lengthAdjust="spacingAndGlyphs" style="font-size:21px;fill:#222">http://www.</text>
<path d="M975 697l5 21 5-6 14 14 5-4-13-13 8-3Z" fill="#e6e6e6" stroke="#111" stroke-width="1.400"/>
<text x="914" y="750" class="m" textLength="111" lengthAdjust="spacingAndGlyphs">Najbolji hosting u Srbiji,</text>
<text x="914" y="763" class="m" textLength="112" lengthAdjust="spacingAndGlyphs">Bosni, Hrvatskoj i Crnoj</text>
<text x="914" y="776" class="m" textLength="103" lengthAdjust="spacingAndGlyphs">Gori. Brza registracija</text>
<text x="914" y="789" class="m" textLength="122" lengthAdjust="spacingAndGlyphs">domena i aktivacija sajta!</text>
<line x1="914" y1="799.500" x2="1037" y2="799.500" stroke="#dfe3ea"/>
<text x="914" y="819" class="b l" textLength="95" lengthAdjust="spacingAndGlyphs">Play The Sims on</text>
<text x="914" y="832" class="b l" textLength="54" lengthAdjust="spacingAndGlyphs">Facebook</text>
<rect x="915" y="837" width="99" height="72" fill="url(#sims)"/>
<path d="M984 875l-8 34h6l8-34Z" fill="#8a5a2a"/>
<path d="M992 838l9 16-9 30-10-30Z" fill="#49b34a"/>
<g filter="url(#b0)">
<path d="M915 909c0-5 4-9 8-11l26-1 20 7 3 5Z" fill="#d09ccc"/>
<path d="M921 876c-4-20 8-36 20-36s21 10 22 26l-3 10-6-12-26 0-4 12Z" fill="#dcdce0"/>
<path d="M927 866c1 24 8 39 17 41 9-2 15-17 16-39-10-7-24-8-33-2Z" fill="#c89878"/>
<rect x="930" y="876" width="10" height="6" fill="none" stroke="#666"/><rect x="944" y="876" width="10" height="6" fill="none" stroke="#666"/>
<path d="M936 896h12" stroke="#8f3526" stroke-width="2"/>
</g>
<text x="968" y="868" class="b" style="font-size:20px;fill:#fff;stroke:#2a79c9;stroke-width:.9" textLength="45" lengthAdjust="spacingAndGlyphs">SIMS</text>
<rect x="977" y="870" width="28" height="9" rx="3.500" fill="#2a84c8"/>
<text x="979" y="877.500" class="b" style="font-size:7.500px;fill:#fff" textLength="24" lengthAdjust="spacingAndGlyphs">social</text>
<text x="914" y="927" class="m" textLength="77" lengthAdjust="spacingAndGlyphs">The Sims has hit</text>
<text x="914" y="940" class="m" textLength="101" lengthAdjust="spacingAndGlyphs">Facebook! Don't miss</text>
<text x="914" y="953" class="m" textLength="69" lengthAdjust="spacingAndGlyphs">out, play now!</text>
<text x="914" y="971" class="g" textLength="119" lengthAdjust="spacingAndGlyphs">Jovana Dinic played this.</text>

<!-- chat -->
<rect x="830.500" y="988.500" width="27" height="26" fill="#e7ebf2" stroke="#b9c3d9"/>
<use href="#globe" x="836" y="992" width="16" height="16"/>
<rect x="862.500" y="988.500" width="179" height="26" fill="#e7ebf2" stroke="#b9c3d9"/>
<path d="M869 1005v-2l3-1v-2c-1-1-1-2-1-3a2.500 2.500 0 0 1 5 0c0 1 0 2-1 3v2l3 1v2Z" fill="#666"/><circle cx="881" cy="1000" r="3" fill="#777"/>
<text x="887" y="1004" class="b" textLength="75" lengthAdjust="spacingAndGlyphs" style="fill:#222">Chat (Offline)</text>
<rect x="1046.500" y="988.500" width="27" height="26" fill="#e7ebf2" stroke="#b9c3d9"/>
<circle cx="1057" cy="996" r="3" fill="#6d84b4"/><path d="M1054 1006c0-6 1-7 3-7s3 1 3 7Z" fill="#6d84b4"/><rect x="1060" y="997" width="6" height="10" fill="#fff" stroke="#777"/><rect x="1056" y="1003" width="8" height="4" fill="#9fd07a" stroke="#3e8a1e" stroke-width=".7"/>

<!-- scrollbar -->
<rect x="1090" y="88" width="16" height="926" fill="#f6f5ef"/>
<rect x="1091.500" y="90.500" width="13" height="14" rx="2" fill="#c9d8fb" stroke="#fff"/>
<path d="M1094 99.500l4-4 4 4" fill="none" stroke="#4d6185" stroke-width="2"/>
<rect x="1091.500" y="113.500" width="13" height="174" rx="2" fill="url(#thumb)" stroke="#9fb7ea"/>
<path d="M1095 196h6M1095 198h6M1095 200h6M1095 202h6" stroke="#eef3ff"/>
<rect x="1091" y="997" width="13" height="15" rx="1" fill="#c9d8fb"/>
<path d="M1094 1002l4 4 4-4" fill="none" stroke="#4d6185" stroke-width="2"/>

<!-- browser chrome top -->
<rect width="1110" height="88" fill="#ece9d8"/>
<rect width="1110" height="4.500" fill="#0a5fe6"/>
<rect x="1041" y="0" width="19" height="2" fill="#dfe8fb"/><rect x="1063" y="0" width="19" height="2" fill="#dfe8fb"/><rect x="1085" y="0" width="19" height="2" fill="#d9694a"/>
<text x="11" y="20" style="fill:#111" textLength="16" lengthAdjust="spacingAndGlyphs">File</text>
<text x="43" y="20" style="fill:#111" textLength="18" lengthAdjust="spacingAndGlyphs">Edit</text>
<text x="78" y="20" style="fill:#111" textLength="22" lengthAdjust="spacingAndGlyphs">View</text>
<text x="115" y="20" style="fill:#111" textLength="34" lengthAdjust="spacingAndGlyphs">History</text>
<text x="165" y="20" style="fill:#111" textLength="51" lengthAdjust="spacingAndGlyphs">Bookmarks</text>
<text x="233" y="20" style="fill:#111" textLength="22" lengthAdjust="spacingAndGlyphs">Tools</text>
<text x="271" y="20" style="fill:#111" textLength="22" lengthAdjust="spacingAndGlyphs">Help</text>
<g fill="#111"><rect x="11" y="21" width="5" height="1"/><rect x="43" y="21" width="5" height="1"/><rect x="78" y="21" width="6" height="1"/><rect x="126" y="21" width="5" height="1"/><rect x="165" y="21" width="6" height="1"/><rect x="233" y="21" width="6" height="1"/><rect x="271" y="21" width="6" height="1"/></g>
<rect x="0" y="51" width="1110" height="1" fill="#8f8d80"/>
<!-- tabs -->
<g stroke="#8f8d80" fill="url(#tab)">
<path d="M6.500 51V29q0-2 2-2h26q2 0 2 2v22Z"/>
<path d="M38.500 51V29q0-2 2-2h26q2 0 2 2v22Z"/>
<path d="M102.500 51V29q0-2 2-2h245q2 0 2 2v22Z"/>
<path d="M352.500 51V29q0-2 2-2h245q2 0 2 2v22Z"/>
<path d="M602.500 51V29q0-2 2-2h245q2 0 2 2v22Z"/>
<path d="M852.500 51V29q0-2 2-2h23q2 0 2 2v22Z"/>
</g>
<path d="M70.500 52V29q0-2 2-2h27q2 0 2 2v23Z" fill="#ece9d8" stroke="#a9a798"/>
<rect x="71" y="50" width="30" height="3" fill="#ece9d8"/>
<!-- tab icons -->
<rect x="15" y="32" width="15" height="15" rx="2" fill="#2a2a2a"/><rect x="15" y="32" width="15" height="3" fill="#5c9c3c"/><path d="M22.500 36v8M18.500 40h8" stroke="#fff" stroke-width="2.500"/>
<rect x="46" y="34" width="16" height="12" fill="#fff" stroke="#d33" stroke-width="1"/><path d="M46 34l8 7 8-7" fill="none" stroke="#d22" stroke-width="2.500"/>
<rect x="79" y="32" width="15" height="15" fill="#3b5998"/><path d="M87 47v-6h-2v-2.500h2V36c0-2 1.500-2.500 4-2.500v2.300c-1.300 0-1.500.3-1.500 1.200v1.500h1.500l-.3 2.500h-1.200v6Z" fill="#fff"/><rect x="79" y="44" width="7" height="3" fill="#6d84b4"/>
<rect x="107" y="32" width="16" height="16" fill="#9db6d1"/><text x="109" y="44" style="font-size:8px;fill:#eef" textLength="11" lengthAdjust="spacingAndGlyphs">mc</text>
<text x="126" y="44" textLength="122" lengthAdjust="spacingAndGlyphs" style="fill:#111">Privatne poruke :: MyCity</text>
<path d="M337 36l7 7M344 36l-7 7" stroke="#9a9a8e" stroke-width="1.600"/>
<rect x="358" y="31" width="15" height="8" fill="#fff"/><text x="359" y="38" class="b" style="font-size:6.500px;fill:#111" textLength="12" lengthAdjust="spacingAndGlyphs">You</text>
<rect x="358" y="39" width="15" height="9" rx="1.500" fill="#e02a20"/><text x="359" y="46.500" class="b" style="font-size:6.500px;fill:#fff" textLength="13" lengthAdjust="spacingAndGlyphs">Tube</text>
<text x="376" y="44" textLength="203" lengthAdjust="spacingAndGlyphs" style="fill:#111;font-family:'DejaVu Sans',sans-serif">♫ Erik Satie - Gymnopédie No.1 ♫ - YouT...</text>
<path d="M587 36l7 7M594 36l-7 7" stroke="#9a9a8e" stroke-width="1.600"/>
<rect x="607" y="32" width="16" height="16" fill="#9db6d1"/><text x="609" y="44" style="font-size:8px;fill:#eef" textLength="11" lengthAdjust="spacingAndGlyphs">mc</text>
<text x="626" y="44" textLength="67" lengthAdjust="spacingAndGlyphs" style="fill:#111">Traži :: MyCity</text>
<path d="M837 36l7 7M844 36l-7 7" stroke="#9a9a8e" stroke-width="1.600"/>
<path d="M866 34v10M861 39h10" stroke="#444" stroke-width="2"/>
<path d="M1090 38h7l-3.500 3.500Z" fill="#888"/>
<!-- nav bar -->
<rect x="0" y="52" width="1110" height="36" fill="#ece9d8"/>
<rect x="0" y="87" width="1110" height="1" fill="#cfcdbd"/>
<path d="M30 58.500h27q3 0 3 3v15q0 3-3 3H30Z" fill="url(#btn)" stroke="#b3b1a3"/>
<path d="M45 64v3h-4v4h4v3l7-5Z" fill="#a9a99e"/>
<circle cx="23" cy="69" r="15.500" fill="url(#btn)" stroke="#918f82"/>
<path d="M30 67h-9v-4l-6 6 6 6v-4h9Z" fill="#55606b"/>
<rect x="68.500" y="57.500" width="620" height="23" rx="3" fill="#fff" stroke="#aaa89a"/>
<path d="M69 60q0-2 2-2h26v22H71q-2 0-2-2Z" fill="#efeee6"/>
<rect x="76" y="62" width="14" height="14" fill="#3b5998"/><path d="M84 76v-5.500h-2v-2.300h2v-2c0-1.800 1.400-2.400 3.700-2.400v2.100c-1.200 0-1.400.3-1.400 1.100v1.200h1.400l-.3 2.300h-1.100V76Z" fill="#fff"/><rect x="76" y="73" width="6" height="3" fill="#6d84b4"/>
<text x="101" y="74" class="g" textLength="60" lengthAdjust="spacingAndGlyphs">http://www.</text>
<text x="161" y="74" style="fill:#222" textLength="69" lengthAdjust="spacingAndGlyphs">facebook.com</text>
<text x="230" y="74" class="g" textLength="63" lengthAdjust="spacingAndGlyphs">/damnjanovic</text>
<path d="M642 61l2.500 5.500 6 .5-4.500 4 1.300 6-5.300-3-5.300 3 1.300-6-4.500-4 6-.5Z" fill="#e6e6e0" stroke="#aaa"/>
<path d="M656 68h6l-3 3Z" fill="#888"/>
<rect x="667" y="58" width="1" height="22" fill="#c9c7ba"/>
<path d="M684 66a6 6 0 1 0 0 6" fill="none" stroke="#555" stroke-width="2"/><path d="M680 63h6v6Z" fill="#555"/>
<rect x="695.500" y="57.500" width="201" height="23" rx="3" fill="#fff" stroke="#aaa89a"/>
<rect x="700" y="61" width="8" height="8" fill="#3a6fd8"/><rect x="708" y="61" width="8" height="8" fill="#dc3a2d"/><rect x="700" y="70" width="7" height="7" rx="3" fill="#f2b61a"/><rect x="708" y="69" width="8" height="9" fill="#2e9e3f"/>
<path d="M720 68h6l-3 3Z" fill="#888"/>
<text x="731" y="74" class="g" textLength="71" lengthAdjust="spacingAndGlyphs" style="fill:#9a9a9a">Google Србија</text>
<circle cx="887" cy="66" r="5" fill="#cfe3f6" stroke="#5f92c4" stroke-width="1.500"/><line x1="883" y1="70.500" x2="878.500" y2="75.500" stroke="#c89a50" stroke-width="2.500"/>
<!-- toolbar buttons -->
<g fill="url(#btn)" stroke="#b3b1a3">
<rect x="904.500" y="58.500" width="28" height="22" rx="3"/>
<rect x="939.500" y="58.500" width="41" height="22" rx="3"/>
<rect x="988.500" y="58.500" width="40" height="22" rx="3"/>
<rect x="1035.500" y="58.500" width="28" height="22" rx="3"/>
<rect x="1071.500" y="58.500" width="29" height="22" rx="3"/>
</g>
<path d="M918.500 62l8 7h-2v6h-4v-4h-4v4h-4v-6h-2Z" fill="#3f5666"/>
<circle cx="954" cy="69" r="7" fill="#c97e23"/><ellipse cx="954" cy="71.500" rx="5" ry="3.500" fill="#f3cf8e"/><circle cx="951.500" cy="67" r="1" fill="#222"/><circle cx="956.500" cy="67" r="1" fill="#222"/><path d="M949 62l5-2 5 2-5 2Z" fill="#8c4c12"/>
<line x1="969.500" y1="59" x2="969.500" y2="80" stroke="#c9c7ba"/><path d="M972 68h6l-3 3Z" fill="#222"/>
<ellipse cx="1003" cy="69" rx="7" ry="4" fill="#8f8f8a"/><path d="M996 74l14-9M1000 62l6 14" stroke="#aaa"/>
<line x1="1017.500" y1="59" x2="1017.500" y2="80" stroke="#c9c7ba"/><path d="M1020 68h6l-3 3Z" fill="#222"/>
<path d="M1043 62h5v6l5-6h3l-5 7 5 8h-8l-5-6Z" fill="#e11b22"/><path d="M1051 72l6 3-1 3h-6Z" fill="#222"/>
<rect x="1077.500" y="62.500" width="17" height="15" fill="#ddd" stroke="#888"/><text x="1082" y="74" style="font-size:9px;fill:#333">K</text>

<!-- frame -->
<rect x="0" y="0" width="3.500" height="1022" fill="url(#win)"/>
<rect x="1106" y="0" width="4" height="1022" fill="#0a3ed4"/>
<rect x="0" y="1013" width="1110" height="5" fill="#ece9d8"/>
<rect x="0" y="1013" width="1110" height="1" fill="#a9a798"/>
<rect x="0" y="1018" width="1110" height="4" fill="#1f66dc"/>
<rect x="0" y="1019" width="94" height="3" fill="#3f9a3c"/>
<text x="1023" y="1016" class="b" textLength="82" lengthAdjust="spacingAndGlyphs" style="font-size:15px;fill:#fff;stroke:#3a3a3a;stroke-width:1.400;paint-order:stroke">mycity.rs</text>
</svg>
</body></html>
